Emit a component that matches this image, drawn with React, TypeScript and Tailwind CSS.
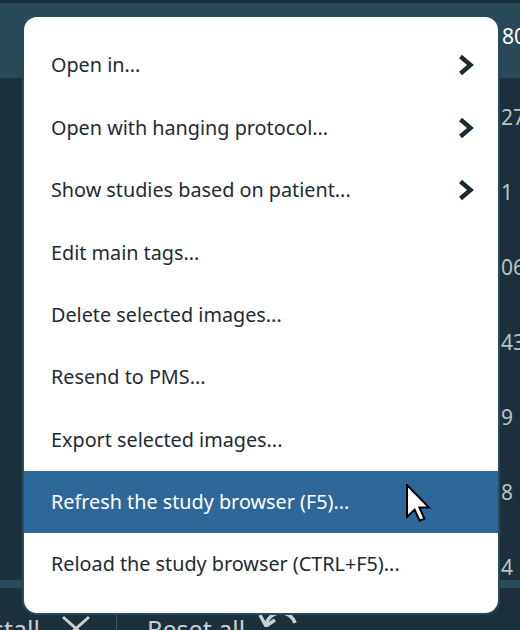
import React from "react";

const items: { label: string; sub?: boolean; active?: boolean }[] = [
  { label: "Open in...", sub: true },
  { label: "Open with hanging protocol...", sub: true },
  { label: "Show studies based on patient...", sub: true },
  { label: "Edit main tags..." },
  { label: "Delete selected images..." },
  { label: "Resend to PMS..." },
  { label: "Export selected images..." },
  { label: "Refresh the study browser (F5)...", active: true },
  { label: "Reload the study browser (CTRL+F5)..." },
];

const nums = ["27", "1", "06", "43", "9", "8", "4"];

function Chevron() {
  return (
    <svg width="20" height="24" viewBox="0 0 20 24" className="shrink-0 mr-[-2px]">
      <path d="M4.5 3.5 L14.5 12 L4.5 20.5" fill="none" stroke="#1c2a33" strokeWidth="4.4" strokeLinejoin="miter" />
    </svg>
  );
}

function Cursor() {
  return (
    <svg width="26" height="38" viewBox="0 0 13 19" className="absolute left-[406px] top-[484px]">
      <path
        d="M0.5 0.5 L0.5 16.5 L4.3 12.8 L6.8 18.3 L9.2 17.3 L6.7 11.8 L11.5 11.8 Z"
        fill="#fff"
        stroke="#000"
        strokeWidth="1"
        strokeLinejoin="miter"
      />
    </svg>
  );
}

export default function App() {
  return (
    <div
      className="relative w-[520px] h-[630px] overflow-hidden bg-[#1c303c] flex flex-col"
      style={{ fontFamily: '"Noto Sans", "Open Sans", sans-serif' }}
    >
      <div className="h-[3px] bg-[#1a2d38]" />
      <div className="h-[75px] bg-[#2a4a5a] flex justify-end items-center">
        <span className="text-white text-[21px] leading-none mr-[-6px] mb-[8px]">80</span>
      </div>
      <div className="flex-1 flex">
        <div className="w-[22px]" />
        <div className="w-[3px] bg-[#2a4a5a]" />
        <div className="flex-1" />
        <div className="w-[21px] flex flex-col pt-[28px] gap-[52px] text-[#b9c2c7] text-[21px] leading-[23px]">
          {nums.map((n) => (
            <span key={n} className="pl-[2px] whitespace-nowrap">{n}</span>
          ))}
        </div>
      </div>
      <div className="h-[8px] bg-[#2a4a5a]" />
      <div className="h-[42px] flex items-start pt-[29px] text-[#c9cfd3] text-[25px] leading-none">
        <span className="ml-[-8px]">stall</span>
        <svg width="32" height="20" viewBox="0 0 32 20" className="ml-[20px] mt-[-3px]">
          <path d="M3 3 L29 26 M29 3 L3 26" stroke="#c9cfd3" strokeWidth="3" />
        </svg>
        <div className="ml-[24px] mt-[-10px] w-[1px] h-[30px] bg-[#3d5663]" />
        <span className="ml-[30px]">Reset all</span>
        <svg width="46" height="24" viewBox="0 0 46 24" className="ml-[12px] mt-[-14px]">
          <path d="M9 22 A15 15 0 0 1 38 20" fill="none" stroke="#c9cfd3" strokeWidth="3.5" />
          <path d="M3 12 L9 23 L18 17" fill="none" stroke="#c9cfd3" strokeWidth="3.5" />
        </svg>
      </div>

      <div className="absolute left-[22px] top-[15px] w-[478px] h-[600px] bg-white rounded-[15px] border-2 border-[#2a4a5a] py-[17px] flex flex-col overflow-hidden">
        {items.map((it) => (
          <div
            key={it.label}
            className={
              "h-[62.4px] shrink-0 flex items-center justify-between pl-[27px] pr-[24px] text-[19.8px] " +
              (it.active ? "bg-[#2e689b] text-white" : "text-[#1e2b35]")
            }
          >
            <span className="whitespace-nowrap">{it.label}</span>
            {it.sub ? <Chevron /> : null}
          </div>
        ))}
      </div>
      <Cursor />
    </div>
  );
}
